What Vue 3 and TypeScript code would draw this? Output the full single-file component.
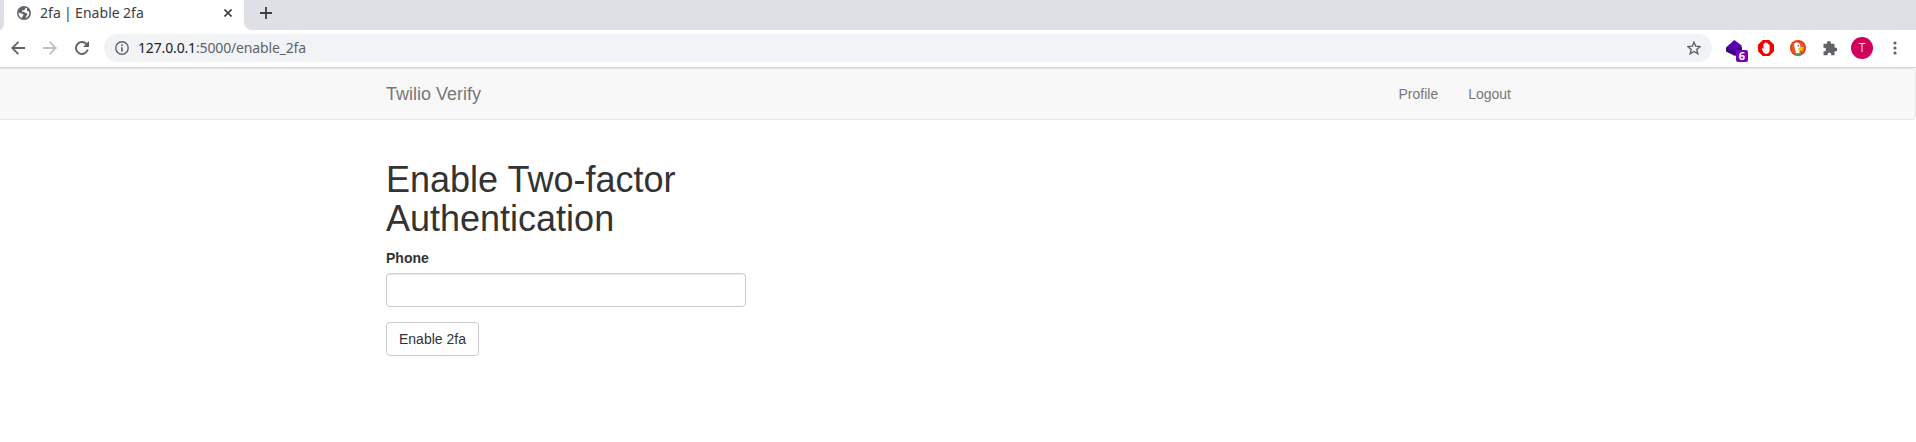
<script setup lang="ts">
import { ref } from 'vue'

const phone = ref('')
const links: string[] = ['Profile', 'Logout']
</script>

<template>
  <div class="browser">
    <div class="tabstrip">
      <div class="strip-left"></div>
      <div class="tab">
        <svg class="globe" viewBox="0 0 14 14" width="14" height="14">
          <circle cx="7" cy="7" r="7" fill="#5f6368" />
          <path d="M8.1 1.6 8.4 3 7 4.2H5.4L5 5.7l2.3.2 1 1.2 1.6.2.5 1.2-1.2 1.4-.4 1.5-1.4 1 .8-.1a5.5 5.5 0 0 0 4-6.6L10.5 5 9.7 4l.5-1.5ZM1.6 6.4l2.8 1.1 1.4.2.8 1-.9 1.2-.6 2.2A5.5 5.5 0 0 1 1.6 6.4Z" fill="#fff" />
        </svg>
        <span class="tab-title">2fa | Enable 2fa</span>
        <svg class="close" viewBox="0 0 8 8" width="8" height="8"><path d="m.5.5 7 7m0-7-7 7" stroke="#3c4043" stroke-width="1.6" /></svg>
      </div>
      <div class="strip-right">
        <svg viewBox="0 0 12 12" width="12" height="12"><path d="M6 0v12M0 6h12" stroke="#3c4043" stroke-width="1.8" /></svg>
      </div>
    </div>

    <div class="toolbar">
      <svg class="back" viewBox="0 0 14 14" width="14" height="14"><path d="M14 7H1.6M7.4.8 1.2 7l6.2 6.2" fill="none" stroke="#5f6368" stroke-width="1.8" /></svg>
      <svg class="forward" viewBox="0 0 14 14" width="14" height="14"><path d="M0 7h12.4M6.6.8 12.8 7l-6.2 6.2" fill="none" stroke="#bdbfc1" stroke-width="1.8" /></svg>
      <svg class="reload" viewBox="0 0 14 14" width="14" height="14">
        <path d="M12.8 8.6A6 6 0 1 1 11.4 2.9L12.6 4.2" fill="none" stroke="#5f6368" stroke-width="1.9" />
        <path d="M14 0v6H8Z" fill="#5f6368" />
      </svg>
      <div class="omnibox">
        <svg viewBox="0 0 14 14" width="14" height="14">
          <circle cx="7" cy="7" r="6.2" fill="none" stroke="#5f6368" stroke-width="1.4" />
          <path d="M7 6.2v4.2M7 3.4v1.5" stroke="#5f6368" stroke-width="1.7" />
        </svg>
        <span class="url"><b>127.0.0.1</b>:5000/enable_2fa</span>
        <svg class="star" viewBox="0 0 14 14" width="14" height="14"><path d="m7 1.2 1.7 4 4.5.4-3.4 2.9 1 4.3L7 10.5l-3.8 2.3 1-4.3L.8 5.6l4.5-.4Z" fill="none" stroke="#5f6368" stroke-width="1.4" /></svg>
      </div>
      <div class="ext cube">
        <svg viewBox="0 0 16 16" width="16" height="16">
          <path d="M0 7.6 8 4l8 3v3.5L9 16 0 11.6Z" fill="#37007d" />
          <path d="m8.4 0 7.6 5.8-7.3 6L.2 7.2Z" fill="#5a00b4" />
        </svg>
        <span class="badge">6</span>
      </div>
      <svg class="ext" viewBox="0 0 16 16" width="16" height="16">
        <path d="M4.8 0h6.4L16 4.8v6.4L11.2 16H4.8L0 11.2V4.8Z" fill="#f40000" />
        <path d="M3.7 8.3c.8-.4 1.4.2 1.8.9V4c0-.9 1.3-.9 1.4 0V3c.1-.9 1.4-.9 1.5 0v.5c.2-.8 1.5-.7 1.6.2v1c.3-.7 1.6-.6 1.6.3v5.2c0 2.2-1.3 3.6-3.3 3.6-2.7 0-3.6-2.5-4.6-5.5Z" fill="#fff" />
      </svg>
      <svg class="ext" viewBox="0 0 16 16" width="16" height="16">
        <circle cx="8" cy="8" r="8" fill="#e3390e" />
        <circle cx="8" cy="8" r="6.6" fill="#e8582f" />
        <path d="M4 4C5.6 1.8 9.4 2.2 10.2 5.2l.2 3-1 2.6.3 3.4-3.2.4L5 9Z" fill="#fff" />
        <path d="M8.2 8.3c1.8-1 4.6-1.4 5.8-1.1L12.2 9l1.2 1.2-4.8.6Z" fill="#fdc700" />
        <path d="m6.2 13.3 5.1-.5-.3 2.4-4.7.2Z" fill="#34a853" />
        <circle cx="8.3" cy="5.8" r=".8" fill="#315c82" />
      </svg>
      <svg class="ext puzzle" viewBox="0 0 16 16" width="16" height="16"><path d="M1.5 3.8h3.4V2.9a2 2 0 0 1 4 0v.9h3.6v3.6h.8a2 2 0 0 1 0 4h-.8v3.8H9.2v-.9a1.8 1.8 0 0 0-3.6 0v.9H1.5v-3.8h.8a1.8 1.8 0 0 0 0-3.6h-.8Z" fill="#5f6368" /></svg>
      <div class="avatar">T</div>
      <svg class="menu" viewBox="0 0 4 14" width="4" height="14" fill="#5f6368"><circle cx="2" cy="2" r="1.6" /><circle cx="2" cy="7" r="1.6" /><circle cx="2" cy="12" r="1.6" /></svg>
    </div>

    <div class="page">
      <nav class="navbar">
        <div class="container nav-inner">
          <a class="brand">Twilio Verify</a>
          <div class="links">
            <a v-for="link in links" :key="link">{{ link }}</a>
          </div>
        </div>
      </nav>
      <main class="container">
        <form class="column" @submit.prevent>
          <h1>Enable Two-factor Authentication</h1>
          <label for="phone">Phone</label>
          <input id="phone" v-model="phone" type="text" />
          <button type="submit">Enable 2fa</button>
        </form>
      </main>
    </div>
  </div>
</template>

<style>
body {
  margin: 0;
  background: #fff;
}
</style>

<style scoped>
* {
  box-sizing: border-box;
}
svg {
  display: block;
  flex: none;
}
.browser {
  height: 442px;
  overflow: hidden;
  background: #fff;
  font-family: "Liberation Sans", Arial, sans-serif;
}
.tabstrip {
  display: flex;
  height: 30px;
}
.strip-left {
  width: 4px;
  background: #dee0e5;
  border-bottom-right-radius: 4px 8px;
}
.tab {
  display: flex;
  align-items: center;
  width: 240px;
  height: 26px;
  padding: 0 12px 0 13px;
  background: #fff;
}
.tab-title {
  flex: 1;
  margin-left: 9px;
  font: 14px/20px "Noto Sans", sans-serif;
  letter-spacing: 0.06px;
  word-spacing: -0.5px;
  white-space: pre;
  color: #3c4043;
}
.strip-right {
  flex: 1;
  padding: 7px 16px;
  background: #dee0e5;
  border-bottom-left-radius: 8px;
}
.toolbar {
  display: flex;
  align-items: center;
  height: 38px;
  padding: 0 19px 2px 11px;
  border-bottom: 1px solid #d5d6d8;
}
.forward {
  margin-left: 18px;
}
.reload {
  margin-left: 18px;
}
.omnibox {
  display: flex;
  flex: 1;
  align-items: center;
  height: 28px;
  margin-left: 15px;
  padding: 0 11px;
  background: #f1f3f4;
  border-radius: 14px;
}
.url {
  flex: 1;
  margin-left: 9px;
  font: 14px/20px "Noto Sans", sans-serif;
  letter-spacing: -0.15px;
  color: #5f6368;
}
.url b {
  font-weight: 400;
  color: #202124;
}
.ext {
  margin-left: 16px;
}
.cube {
  position: relative;
  margin-left: 14px;
}
.badge {
  position: absolute;
  top: 10px;
  left: 10px;
  width: 12px;
  height: 12px;
  border-radius: 2px;
  background: #7d00b8;
  color: #fff;
  font: bold 11px/12px "Noto Sans", sans-serif;
  text-align: center;
}
.avatar {
  width: 22px;
  height: 22px;
  margin-left: 13px;
  border-radius: 50%;
  background: #d1005b;
  color: #f5d5e3;
  font: 12px/22px "Noto Sans", sans-serif;
  text-align: center;
}
.menu {
  margin-left: 20px;
}
.page {
  width: 1920px;
  margin-left: -4px;
  font-size: 14px;
  line-height: 20px;
  color: #333;
}
.navbar {
  height: 52px;
  margin-bottom: 20px;
  border: 1px solid #e7e7e7;
  border-radius: 4px;
  background: #f8f8f8;
}
.container {
  width: 1170px;
  margin: 0 auto;
  padding: 0 15px;
}
.nav-inner {
  display: flex;
  justify-content: space-between;
  color: #777;
}
.brand {
  padding: 15px 0;
  font-size: 18px;
}
.links {
  display: flex;
}
.links a {
  padding: 15px;
}
.column {
  display: flex;
  flex-direction: column;
  align-items: flex-start;
  width: 360px;
  padding-top: 20px;
}
h1 {
  margin: 0 0 10px;
  font-size: 36px;
  font-weight: 500;
  line-height: 39px;
}
label {
  margin-bottom: 5px;
  font-weight: 700;
}
input {
  width: 100%;
  height: 34px;
  margin: 0 0 15px;
  padding: 6px 12px;
  border: 1px solid #ccc;
  border-radius: 4px;
  box-shadow: inset 0 1px 1px rgba(0, 0, 0, 0.075);
  font: inherit;
}
button {
  height: 34px;
  padding: 6px 12px;
  border: 1px solid #ccc;
  border-radius: 4px;
  background: #fff;
  color: #333;
  font: inherit;
}
</style>
